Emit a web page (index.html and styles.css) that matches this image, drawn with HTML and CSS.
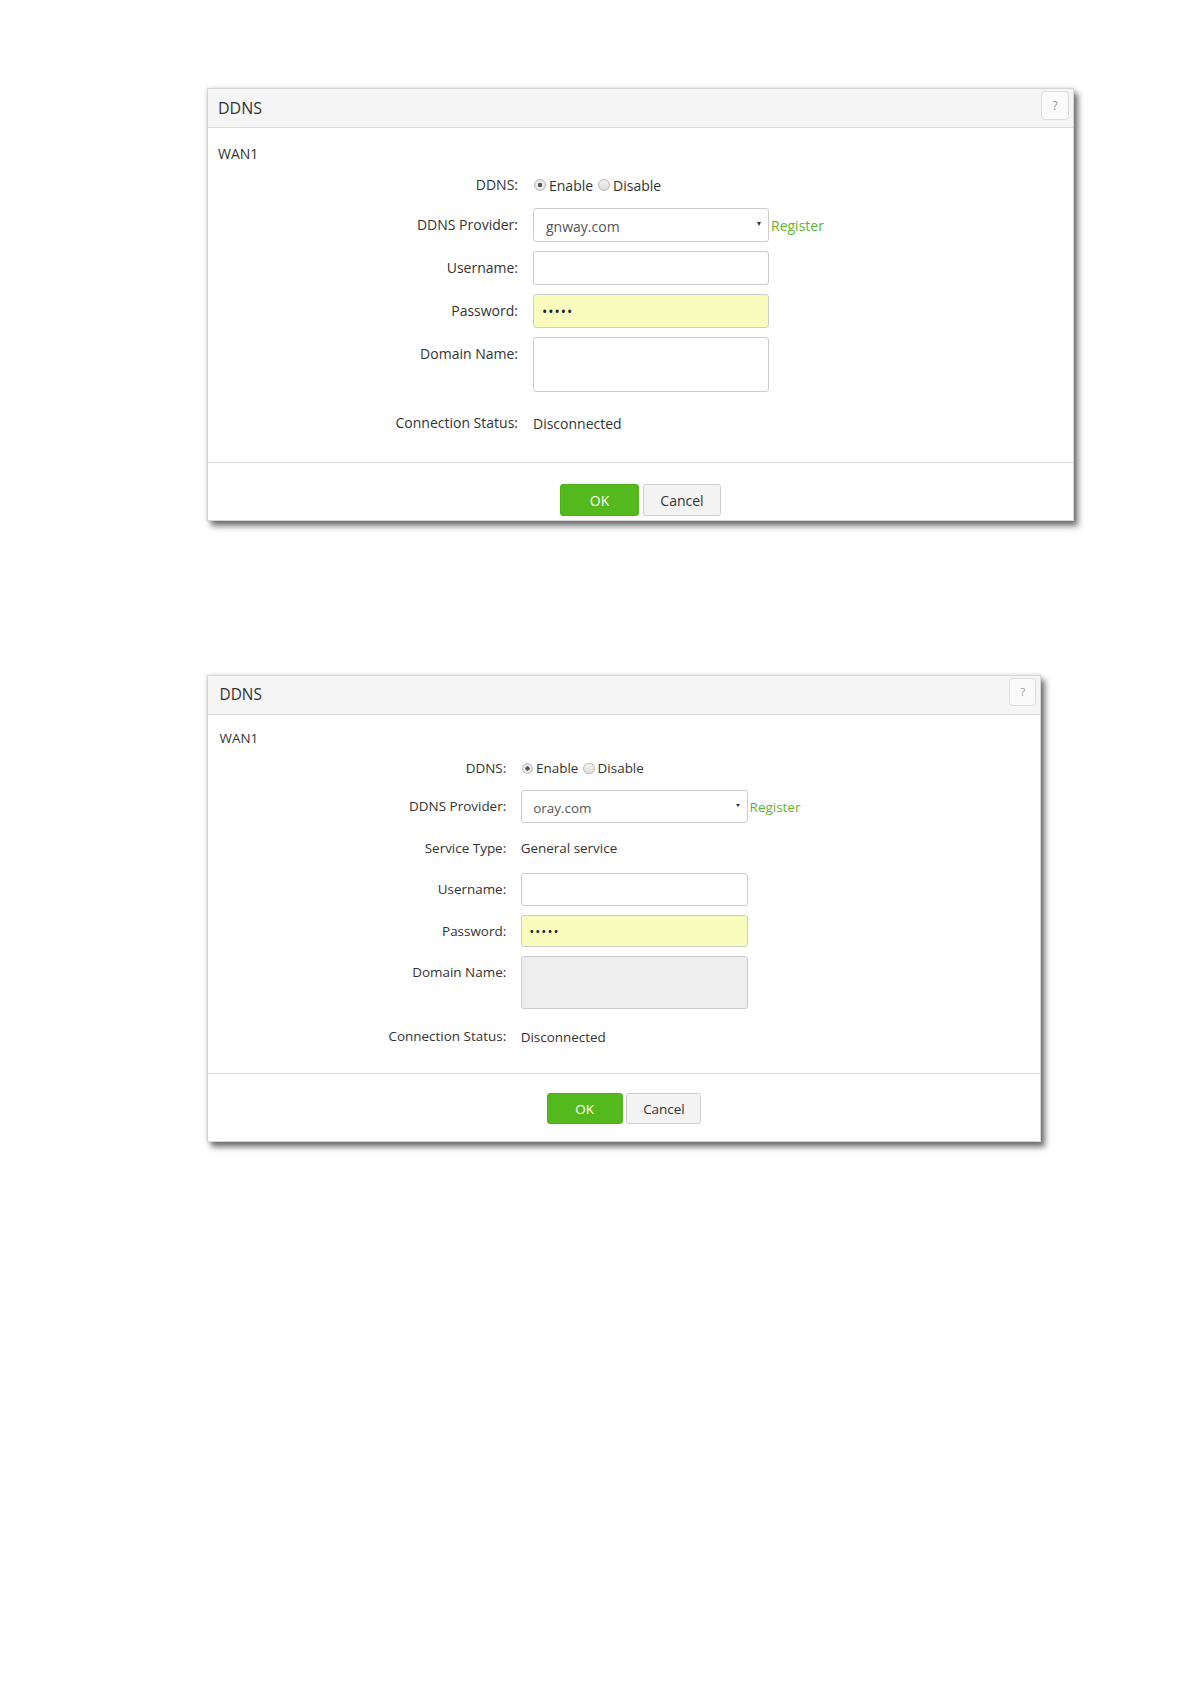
FILE: index.html
```html
<!DOCTYPE html>
<html lang="en">

<head>
    <meta charset="UTF-8">
    <meta name="viewport" content="width=device-width, initial-scale=1.0">
    <title>DDNS</title>
    <link rel="stylesheet" href="styles.css">
</head>

<body>
    <div class="page">

        <!-- gnway.com -->
        <div class="panel-frame">
            <section class="panel">
                <div class="panel-head">
                    <h2 class="panel-title">DDNS</h2>
                    <button class="help-btn" type="button">?</button>
                </div>
                <div class="panel-body">
                    <div class="wan-title">WAN1</div>

                    <div class="form-row radio-row">
                        <span class="row-label">DDNS:</span>
                        <div class="row-control">
                            <label class="radio"><input type="radio" name="ddns1" checked>Enable</label>
                            <label class="radio"><input type="radio" name="ddns1">Disable</label>
                        </div>
                    </div>

                    <div class="form-row">
                        <label class="row-label" for="provider1">DDNS Provider:</label>
                        <div class="row-control">
                            <div class="select-wrap">
                                <select class="field" id="provider1">
                                    <option>gnway.com</option>
                                    <option>oray.com</option>
                                </select>
                            </div>
                            <a href="#" class="register">Register</a>
                        </div>
                    </div>

                    <div class="form-row">
                        <label class="row-label" for="user1">Username:</label>
                        <div class="row-control">
                            <input class="field" type="text" id="user1">
                        </div>
                    </div>

                    <div class="form-row">
                        <label class="row-label" for="pass1">Password:</label>
                        <div class="row-control">
                            <input class="field field-pass" type="password" id="pass1" value="12345">
                        </div>
                    </div>

                    <div class="form-row row-domain">
                        <label class="row-label" for="domain1">Domain Name:</label>
                        <div class="row-control">
                            <textarea class="field" id="domain1"></textarea>
                        </div>
                    </div>

                    <div class="form-row row-status">
                        <span class="row-label">Connection Status:</span>
                        <div class="row-control">Disconnected</div>
                    </div>
                </div>
                <div class="panel-foot">
                    <button class="btn btn-ok" type="button">OK</button>
                    <button class="btn btn-cancel" type="button">Cancel</button>
                </div>
            </section>
        </div>

        <!-- oray.com -->
        <div class="panel-frame">
            <section class="panel panel-alt">
                <div class="panel-head">
                    <h2 class="panel-title">DDNS</h2>
                    <button class="help-btn" type="button">?</button>
                </div>
                <div class="panel-body">
                    <div class="wan-title">WAN1</div>

                    <div class="form-row radio-row">
                        <span class="row-label">DDNS:</span>
                        <div class="row-control">
                            <label class="radio"><input type="radio" name="ddns2" checked>Enable</label>
                            <label class="radio"><input type="radio" name="ddns2">Disable</label>
                        </div>
                    </div>

                    <div class="form-row">
                        <label class="row-label" for="provider2">DDNS Provider:</label>
                        <div class="row-control">
                            <div class="select-wrap">
                                <select class="field" id="provider2">
                                    <option>oray.com</option>
                                    <option>gnway.com</option>
                                </select>
                            </div>
                            <a href="#" class="register">Register</a>
                        </div>
                    </div>

                    <div class="form-row">
                        <span class="row-label">Service Type:</span>
                        <div class="row-control">General service</div>
                    </div>

                    <div class="form-row">
                        <label class="row-label" for="user2">Username:</label>
                        <div class="row-control">
                            <input class="field" type="text" id="user2">
                        </div>
                    </div>

                    <div class="form-row">
                        <label class="row-label" for="pass2">Password:</label>
                        <div class="row-control">
                            <input class="field field-pass" type="password" id="pass2" value="12345">
                        </div>
                    </div>

                    <div class="form-row row-domain">
                        <label class="row-label" for="domain2">Domain Name:</label>
                        <div class="row-control">
                            <textarea class="field" id="domain2" disabled></textarea>
                        </div>
                    </div>

                    <div class="form-row row-status">
                        <span class="row-label">Connection Status:</span>
                        <div class="row-control">Disconnected</div>
                    </div>
                </div>
                <div class="panel-foot">
                    <button class="btn btn-ok" type="button">OK</button>
                    <button class="btn btn-cancel" type="button">Cancel</button>
                </div>
            </section>
        </div>

    </div>
</body>

</html>
```

FILE: styles.css
```css
body {
    margin: 0;
    padding: 0;
    font-family: "Open Sans", "Noto Sans", Arial, sans-serif;
    font-size: 14px;
    color: #333;
    background-color: #fff;
}

.page {
    display: flex;
    flex-direction: column;
    align-items: flex-start;
    gap: 154px;
    min-height: 1500px;
    padding: 88px 0 80px 207px;
}

/* the shadow sits on the frame so it is not affected by the zoom below */
.panel-frame {
    background: #fff;
    box-shadow: 4px 5px 6px rgba(0, 0, 0, 0.55), 0 0 4px rgba(0, 0, 0, 0.15);
}

.panel {
    width: 867px;
    box-sizing: border-box;
    background: #fff;
    border: 1px solid #d6d6d6;
}

/* second screenshot was taken a little smaller */
.panel-alt {
    zoom: 0.962;
}

.panel-head {
    display: flex;
    justify-content: space-between;
    height: 38px;
    padding: 0 4px 0 10px;
    background-color: #f5f5f5;
    border-bottom: 1px solid #dcdcdc;
}

.panel-alt .panel-head {
    height: 40px;
    padding-left: 12px;
}

.panel-title {
    margin: 0;
    font-size: 16px;
    font-weight: normal;
    line-height: 38px;
}

.panel-alt .panel-title {
    line-height: 40px;
}

.help-btn {
    margin-top: 2px;
    width: 28px;
    height: 29px;
    padding: 0;
    border: 1px solid #dcdcdc;
    border-radius: 4px;
    background: #fafafa;
    color: #999;
    font-family: inherit;
    font-size: 12px;
}

.panel-body {
    padding: 16px 0 22px;
}

.panel-alt .panel-body {
    padding-top: 14px;
    padding-bottom: 21px;
}

.wan-title {
    padding-left: 10px;
    line-height: 20px;
    margin-bottom: 4px;
}

.panel-alt .wan-title {
    padding-left: 12px;
}

.form-row {
    display: flex;
    align-items: flex-start;
    gap: 15px;
    margin-bottom: 9px;
}

.radio-row {
    margin-bottom: 6px;
}

.row-domain {
    margin-bottom: 14px;
}

.panel-alt .row-domain {
    margin-bottom: 12px;
}

.row-status {
    margin-bottom: 0;
}

.row-label {
    flex: 0 0 310px;
    text-align: right;
    line-height: 34px;
}

.row-control {
    display: flex;
    align-items: center;
    min-height: 34px;
}

.radio {
    display: flex;
    align-items: center;
    margin-right: 4px;
}

.radio input {
    appearance: none;
    width: 12px;
    height: 12px;
    margin: 0 3px 0 1px;
    border: 1px solid #b8b8b8;
    border-radius: 50%;
    background: linear-gradient(#f4f4f4, #dcdcdc);
}

.radio input:checked {
    background: radial-gradient(circle, #555 0, #555 2px, #eee 2.5px, #ddd 100%);
}

.field {
    width: 236px;
    height: 34px;
    box-sizing: border-box;
    margin: 0;
    padding: 0 8px;
    border: 1px solid #ccc;
    border-radius: 3px;
    background: #fff;
    color: #555;
    font-family: inherit;
    font-size: 14px;
}

select.field {
    appearance: none;
    padding: 2px 12px 0;
}

.select-wrap {
    position: relative;
}

.select-wrap::after {
    content: "";
    position: absolute;
    right: 8px;
    top: 14px;
    border-left: 2.5px solid transparent;
    border-right: 2.5px solid transparent;
    border-top: 4px solid #333;
}

.field-pass {
    background-color: #fafcbe;
    color: #222;
    font-size: 14px;
    letter-spacing: 1px;
}

textarea.field {
    height: 55px;
    resize: none;
}

textarea.field:disabled {
    background-color: #eee;
}

.register {
    margin-left: 2px;
    color: #5fb52e;
    text-decoration: none;
}

.panel-foot {
    display: flex;
    justify-content: center;
    gap: 4px;
    padding: 21px 0 4px;
    border-top: 1px solid #ddd;
}

.panel-alt .panel-foot {
    padding-top: 20px;
    padding-bottom: 17px;
}

.btn {
    width: 79px;
    height: 32px;
    padding: 0;
    border-radius: 3px;
    font-family: inherit;
    font-size: 14px;
    cursor: pointer;
}

.btn-ok {
    background-color: #54b91c;
    border: 1px solid #4cb016;
    color: white;
}

.btn-cancel {
    width: 78px;
    background-color: #f4f4f4;
    border: 1px solid #ccc;
    color: #333;
}
```
